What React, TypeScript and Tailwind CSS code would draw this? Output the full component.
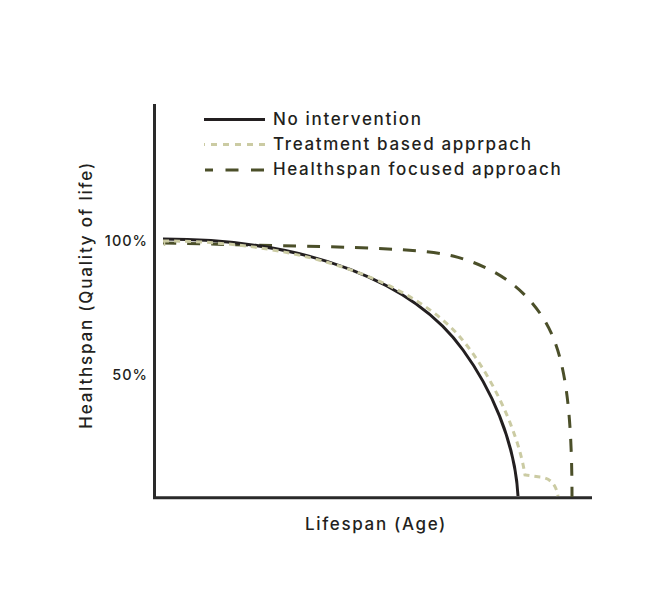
const INK = "#231f20";
const KHAKI = "#cbcba3";
const OLIVE = "#4b4f29";

const font = "Inter, 'DejaVu Sans', sans-serif";

// curve paths in page coordinates (svg viewBox matches the page)
const noIntervention =
  "M163 239 C 310 239, 415 283, 463 350 C 490 387, 515 440, 518 496";
const treatment =
  "M163 241 C 310 241, 415 285, 460 337 C 490 372, 518 430, 525 475 L 540 477 C 550 478, 556 484, 558 496";
const healthspan =
  "M163 243 C 330 247, 415 247, 453 256 C 500 268, 535 295, 553 337 C 563 362, 572 400, 572 497";

function Legend() {
  const rows = [
    { label: "No intervention", y: 125 },
    { label: "Treatment based apprpach", y: 150 },
    { label: "Healthspan focused approach", y: 175 },
  ];
  return (
    <g>
      <path d="M204 119.5 H265" stroke={INK} strokeWidth={3} fill="none" />
      <path d="M204 144.5 H265" stroke={KHAKI} strokeWidth={3} strokeDasharray="6 6" strokeDashoffset={5} fill="none" />
      <path d="M205 170 H265" stroke={OLIVE} strokeWidth={3} strokeDasharray="13 12.5" strokeDashoffset={5} fill="none" />
      {rows.map((r) => (
        <text key={r.label} x={273} y={r.y} fontSize={17} fontWeight={500} letterSpacing={1.65} fill={INK} style={{ fontFamily: font }}>
          {r.label}
        </text>
      ))}
    </g>
  );
}

export default function App() {
  return (
    <div className="w-[662px] h-[616px] bg-white flex pt-[95px] text-[#231f20] font-['Inter','DejaVu_Sans',sans-serif] font-medium">
      {/* Y axis title */}
      <div className="w-[100px] h-[400px] flex items-center justify-end pr-[4px] shrink-0">
        <div className="[writing-mode:vertical-rl] [text-orientation:sideways] rotate-180 text-[17px] leading-[20px] tracking-[1.8px] whitespace-nowrap">
          Healthspan (Quality of life)
        </div>
      </div>

      <div className="flex flex-col">
        <svg width={500} height={410} viewBox="100 95 500 410" className="block">
          {/* axes */}
          <path d="M154.5 104 V499" stroke="#2a2a2a" strokeWidth={3} fill="none" />
          <path d="M153 497.7 H592" stroke="#2a2a2a" strokeWidth={3} fill="none" />

          {/* ticks */}
          <text x={148} y={245.5} fontSize={14.5} fontWeight={500} letterSpacing={1} textAnchor="end" fill={INK} style={{ fontFamily: font }}>
            100%
          </text>
          <text x={148} y={379.5} fontSize={14.5} fontWeight={500} letterSpacing={1} textAnchor="end" fill={INK} style={{ fontFamily: font }}>
            50%
          </text>

          <Legend />

          {/* curves */}
          <path d={healthspan} stroke={OLIVE} strokeWidth={3} strokeDasharray="13 11" fill="none" />
          <path d={noIntervention} stroke={INK} strokeWidth={3} fill="none" />
          <path d="M164.5 241 V246" stroke={KHAKI} strokeWidth={1.5} fill="none" />
          <path d={treatment} stroke={KHAKI} strokeWidth={3} strokeDasharray="6 5" fill="none" />
        </svg>

        <div className="ml-[58px] w-[436px] mt-[9px] text-center text-[17px] leading-[20px] tracking-[1.65px]">
          Lifespan (Age)
        </div>
      </div>
    </div>
  );
}
